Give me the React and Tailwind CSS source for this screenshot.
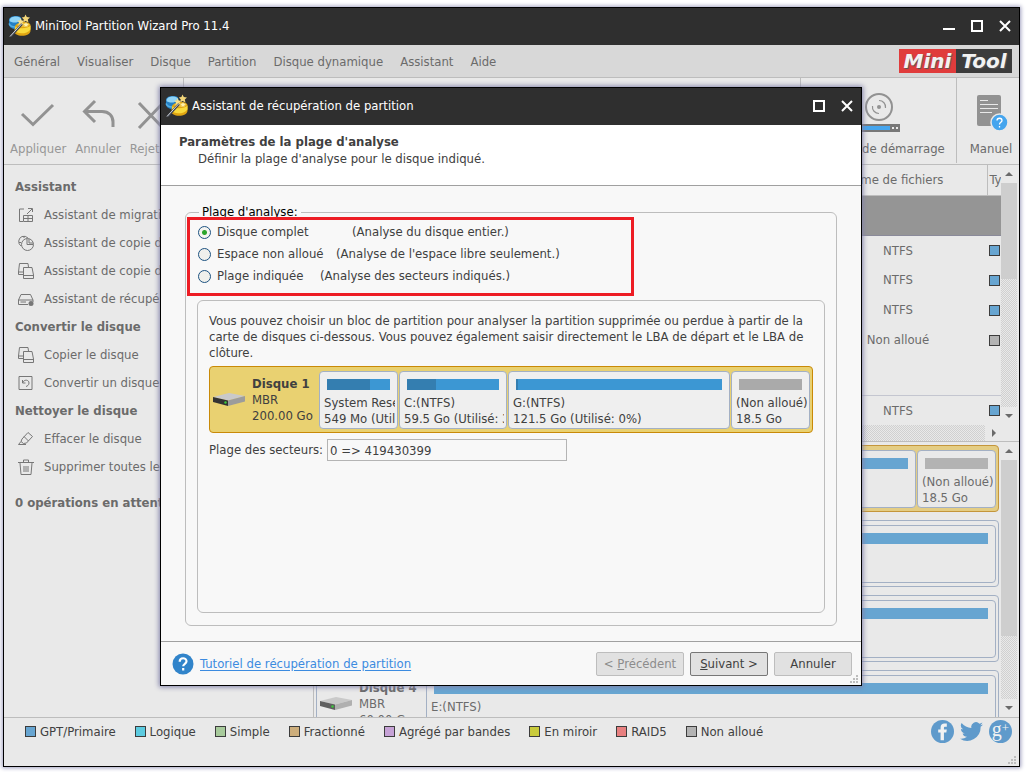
import { clsx } from "clsx";

const AppIcon = () => (
  <svg width="24" height="24" viewBox="0 0 24 24" className="shrink-0" aria-hidden="true">
    <path d="M1 6C1 3.500 4 2 8 2S13 3 13.500 5V13L7 15.500C3 14.500 1 12.500 1 10.500Z" fill="#2480c4" />
    <path d="M1.500 6C2 3.500 5 2.500 8 2.500S12.500 3.500 13 5C11 8 8 9 5 8.500C3 8 1.500 7.500 1.500 6Z" fill="#8fd3f6" />
    <path d="M1 9.500C2 12 4 13 7 13" stroke="#56aee2" strokeWidth="1.500" fill="none" />
    <path d="M7 12C8 10 12 8 16 8S22 9 22.500 11V16.500C22.500 20 18.500 21.800 14 21.800S6.500 20 6.500 17.500Z" fill="#e0a512" />
    <path d="M7.500 12.500C10 15 20 15 22.500 11.500V15.500C20.500 18.500 17 19.300 13.500 19.300S8 18 6.700 16.500Z" fill="#f9da3c" />
    <path d="M9 11C11 9 20 8 21.500 10.500C20 13.500 12 13.500 9 11Z" fill="#efc546" />
    <path d="M12.500 4L13.700 6.500L16 6.700L14.500 8.500L15 11L12.600 10L10.500 11L11 8.500L9.300 6.800L11.600 6.500Z" fill="#f8e08a" />
    <path d="M17.500 0.500L18.800 3L22 3.500L19.800 5.500L20.500 8.500L17.600 7L15.200 8.500L15.800 5.500L13.800 3.500L16.400 3Z" fill="#f3d67a" />
    <path d="M18 8L18.800 9.700L20.500 10L19.200 11.200L19.500 13L18 12L16.500 13L16.800 11.200L15.500 10L17.300 9.700Z" fill="#fdf0b0" />
    <path d="M2.500 22.500L14 10" stroke="#40444c" strokeWidth="2.400" />
    <path d="M2 22.500L13.500 10" stroke="#d4d9e0" strokeWidth="1" />
  </svg>
);

const TitleBar = ({ title, minimize }) => (
  <header className="flex h-[37px] shrink-0 items-center gap-[3px] bg-[#2f2f2f] pb-[2px] pl-1 pr-2 text-white">
    <AppIcon />
    <h1 className="flex-1">{title}</h1>
    <div className="flex gap-4">
      {minimize && (
        <button aria-label="Réduire">
          <svg width="12" height="14" viewBox="0 0 12 14"><path d="M0 10h12" stroke="#fff" strokeWidth="2" /></svg>
        </button>
      )}
      <button aria-label="Agrandir">
        <svg width="12" height="14" viewBox="0 0 12 14"><rect x="1" y="2" width="10" height="10" fill="none" stroke="#fff" strokeWidth="2" /></svg>
      </button>
      <button aria-label="Fermer">
        <svg width="12" height="14" viewBox="0 0 12 14"><path d="M1 2l10 10M11 2L1 12" stroke="#fff" strokeWidth="2" /></svg>
      </button>
    </div>
  </header>
);

const menus = ["Général", "Visualiser", "Disque", "Partition", "Disque dynamique", "Assistant", "Aide"];

const MenuBar = () => (
  <nav className="flex h-[33px] shrink-0 items-center border-b border-[#bdbdbd] bg-[#d8d8d8] pl-[10px] pr-[7px]">
    <div className="flex flex-1 gap-[17px] pt-px">
      {menus.map((name) => (
        <button key={name}>{name}</button>
      ))}
    </div>
    <div className="flex h-6 font-['DejaVu_Sans','sans-serif'] text-[20px] font-bold italic leading-6 text-[#f2f2f2] [text-shadow:1px_1px_1px_#555]">
      <span className="w-[57px] bg-[#e03c3c] text-center">Mini</span>
      <span className="w-14 bg-[#3c3c3c] text-center">Tool</span>
    </div>
  </nav>
);

const ToolButton = ({ label, disabled, children }) => (
  <button disabled={disabled} className="flex flex-col items-center gap-2 disabled:text-[#979797]">
    <svg width="42" height="42" viewBox="0 0 42 42" fill="none" stroke="#929292" strokeWidth="3">{children}</svg>
    <span className="whitespace-nowrap leading-4">{label}</span>
  </button>
);

const Toolbar = () => (
  <div className="flex h-[87px] shrink-0 border-b border-[#bdbdbd] pb-px">
    <div className="flex w-[180px] items-start gap-[9px] border-r border-[#bdbdbd] pl-[6px] pt-[13px]">
      <ToolButton label="Appliquer" disabled>
        <path d="M5 23L16 33.500L36 14" />
      </ToolButton>
      <ToolButton label="Annuler" disabled>
        <path d="M18 10L7.500 20.500L18 31M8 20.500H25C32 20.500 36 25 36 31V36" />
      </ToolButton>
      <ToolButton label="Rejeter" disabled>
        <path d="M9 12L33 37M33 12L9 37" />
      </ToolButton>
    </div>
    <div className="flex-1" />
    <div className="flex w-[156px] justify-center border-l border-[#bdbdbd] pt-[13px]">
      <ToolButton label="Support de démarrage">
        <circle cx="21" cy="16" r="13" strokeWidth="2" />
        <circle cx="21" cy="16" r="2" fill="#929292" stroke="none" />
        <path d="M14.500 15A6.500 6.500 0 0 0 21 22.500M27.500 17A6.500 6.500 0 0 0 21 9.500" strokeWidth="1.200" />
        <rect x="0" y="33" width="42" height="8" fill="#777" stroke="none" />
        <rect x="0" y="35" width="32" height="4" fill="#45a5ee" stroke="none" />
        <path d="M34 37h2M38 37h2" stroke="#e9e9e9" strokeWidth="2" />
      </ToolButton>
    </div>
    <div className="flex w-[63px] justify-center border-l border-[#bdbdbd] pl-[6px] pt-[13px]">
      <ToolButton label="Manuel">
        <rect x="7" y="4" width="24" height="31" rx="2" fill="#929292" stroke="none" />
        <path d="M10 9.500h8M10 13.500h18M10 17.500h18M10 21.500h12" stroke="#e9e9e9" strokeWidth="1" />
        <circle cx="29.500" cy="31.500" r="8.500" fill="#45a5ee" stroke="#e9e9e9" strokeWidth="1.500" />
        <path d="M27 29.500C27 26.500 32 26.500 32 29.500C32 31.300 29.500 31.300 29.500 33.500M29.500 35v1.500" stroke="#fff" strokeWidth="1.300" />
      </ToolButton>
    </div>
  </div>
);

const icons = {
  migrate: <path d="M6 2H1.500V14.500H5M9 7L14 2M10 1.500H14.500V5M5.500 8.500H14.500V14.500H5.500ZM5.500 11.500H14.500M10 8.500V14.500" />,
  partition: (
    <>
      <path d="M3 11A5.500 5.500 0 0 1 4 1.500A6 6 0 0 1 10 3M1 7.500H3M6 1V3" />
      <circle cx="9.500" cy="9.500" r="6" />
      <path d="M9 4V9.500H15M11 4V8H15" />
    </>
  ),
  copy: <path d="M5 11.500H.5V9L1.500 .5H10L10.500 4M.5 9H5M5.500 4.500H14L15.500 12V15.500H5.500ZM5.500 12.500H15.500" />,
  recover: (
    <>
      <path d="M3 3.500H12.500L15 9V11M3 3.500L.5 9V13.500H10M.5 9H15M2.500 11H8" />
      <circle cx="13" cy="12.500" r="2.500" fill="#777" stroke="none" />
    </>
  ),
  convert: <path d="M1 1.500H14V14.500H1ZM4.500 5V8H7.500M4.500 8C6 4 11 4.500 11 8C11 10 9.500 11 8 11.500" />,
  erase: <path d="M4 8L10 1.500L14.500 5.500L8.500 12L5.500 12.500L3 10.500ZM6 5.500L10.500 10M3 10.500L.5 13.500H8" />,
  trash: <path d="M0 3.500H16M5.500 3V1H10.500V3M2 4L3 15.500H13L14 4M6 7V13M8 7V13M10 7V13" />,
};

const sections = [
  {
    title: "Assistant",
    items: [
      ["migrate", "Assistant de migration"],
      ["partition", "Assistant de copie de partition"],
      ["copy", "Assistant de copie de disque"],
      ["recover", "Assistant de récupération"],
    ],
  },
  {
    title: "Convertir le disque",
    items: [
      ["copy", "Copier le disque"],
      ["convert", "Convertir un disque MBR"],
    ],
  },
  {
    title: "Nettoyer le disque",
    items: [
      ["erase", "Effacer le disque"],
      ["trash", "Supprimer toutes les partitions"],
    ],
  },
];

const Sidebar = () => (
  <aside className="w-[309px] shrink-0 pl-[11px] pt-2">
    {sections.map((section) => (
      <section key={section.title}>
        <h2 className="font-bold leading-7">{section.title}</h2>
        <ul>
          {section.items.map(([icon, label]) => (
            <li key={label}>
              <button className="flex h-7 items-center gap-[10px] pl-[3px]">
                <svg width="16" height="16" viewBox="0 0 16 16" fill="none" stroke="#777" strokeWidth="1">{icons[icon]}</svg>
                {label}
              </button>
            </li>
          ))}
        </ul>
      </section>
    ))}
    <p className="mt-2 font-bold leading-7">0 opérations en attente</p>
  </aside>
);

const ScrollArrow = ({ d }) => (
  <button aria-label="Défiler" className="grid h-[18px] w-4 shrink-0 place-items-center">
    <svg width="8" height="8" viewBox="0 0 8 8"><path d={d} fill="#6a6a6a" /></svg>
  </button>
);

const trackPattern = "bg-[repeating-conic-gradient(#d0d0d0_0_25%,#e9e9e9_0_50%)] bg-[length:2px_2px]";

const VerticalScroll = ({ thumb, track }) => (
  <div className="mr-[2px] flex w-4 shrink-0 flex-col">
    <ScrollArrow d="M0 6L4 2L8 6Z" />
    <div className={clsx("bg-[#cecece]", thumb)} />
    <div className={clsx(trackPattern, track)} />
    <ScrollArrow d="M0 2L8 2L4 6Z" />
  </div>
);

const Swatch = ({ color }) => <span className={clsx("block size-[11px] shrink-0 border border-[#3c3c3c]", color)} />;

const partitionRows = [
  ["NTFS", "bg-[#67a5d1]"],
  ["NTFS", "bg-[#67a5d1]"],
  ["NTFS", "bg-[#67a5d1]"],
  ["Non alloué", "bg-[#b3b3b3]"],
];

const PartitionRow = ({ fs, color }) => (
  <tr className="h-[30px]">
    <td />
    <td className="text-center">{fs}</td>
    <td className="pl-[2px]"><Swatch color={color} /></td>
  </tr>
);

const PartitionTable = () => (
  <div className="shrink-0 border-b border-[#bdbdbd]">
    <div className="flex">
      <div className="min-w-0 flex-1">
        <table className="w-full table-fixed border-collapse">
          <colgroup>
            <col />
            <col className="w-[178px]" />
            <col className="w-[14px]" />
          </colgroup>
          <thead>
            <tr className="h-[30px] border-b border-[#bdbdbd]">
              <th />
              <th className="whitespace-nowrap pr-6 font-normal">Système de fichiers</th>
              <th className="overflow-hidden border-l border-[#bdbdbd] pl-[2px] text-left font-normal">Type</th>
            </tr>
          </thead>
          <tbody>
            <tr className="h-10 border-b border-[#8a8a9a] bg-[#959595]"><td colSpan="3" /></tr>
            {partitionRows.map(([fs, color], i) => (
              <PartitionRow key={i} fs={fs} color={color} />
            ))}
            <tr className="h-10 border-b border-[#c4c6d0]"><td colSpan="3" /></tr>
            <PartitionRow fs="NTFS" color="bg-[#67a5d1]" />
          </tbody>
        </table>
      </div>
      <VerticalScroll thumb="flex-[3]" track="flex-[4]" />
    </div>
    <div className="flex h-4 items-center pr-[18px]">
      <div className={clsx("h-4 flex-1", trackPattern)} />
      <ScrollArrow d="M3 0L7 4L3 8Z" />
    </div>
  </div>
);

const DriveIcon = ({ dim }) => (
  <svg width="34" height="14" viewBox="0 0 34 14" className="shrink-0" aria-hidden="true">
    <path d="M1 4L17 0L33 3L16 7.500Z" fill="#c9c9c9" />
    <path d="M1 4L16 7.500V13L1 9Z" fill={dim ? "#5f5f5f" : "#333"} />
    <path d="M16 7.500L33 3V8.500L16 13Z" fill={dim ? "#b0b0b0" : "#9c9c9c"} />
    <circle cx="13.500" cy="9.500" r="1.200" fill="#3ccb3c" />
  </svg>
);

const Partition = ({ name, detail, used, width = "flex-1", gray, dim }) => (
  <div className={clsx("h-[58px] min-w-0 overflow-hidden whitespace-nowrap rounded border border-[#a3b0c4] pl-1 pr-[2px] pt-[7px]", dim ? "bg-[#e9e9e9]" : "bg-[#efefef]", width)}>
    <div className={clsx("mb-[5px] ml-[3px] mr-[5px] h-[11px]", gray ? (dim ? "bg-[#b3b3b3]" : "bg-[#aaaaaa]") : dim ? "bg-[#67a5d1]" : "bg-[#3c97d3]")}>
      <div className="h-full bg-[#347eb0]" style={{ width: used || 0 }} />
    </div>
    <div className="overflow-hidden">
      <p>{name}</p>
      <p>{detail}</p>
    </div>
  </div>
);

const DiskCard = ({ name, size, selected, dim, children }) => (
  <article
    className={clsx(
      "flex h-[67px] shrink-0 items-center rounded border pr-[2px] leading-4",
      selected ? (dim ? "border-[#c4963c] bg-[#e4cd84]" : "border-[#c98a08] bg-[#e9d171]") : "border-[#a3b0c4]"
    )}
  >
    <div className="flex w-[109px] shrink-0 items-center gap-[6px] pl-[2px]">
      <DriveIcon dim={dim} />
      <div className="whitespace-nowrap">
        <h3 className="font-bold">{name}</h3>
        <p>MBR</p>
        <p>{size}</p>
      </div>
    </div>
    <div className="flex min-w-0 flex-1 gap-px">{children}</div>
  </article>
);

const DiskMap = () => (
  <div className="flex min-h-0 flex-1">
    <div className="flex min-w-0 flex-1 flex-col gap-2 overflow-hidden pl-[2px] pr-[2px] pt-[3px]">
      <DiskCard name="Disque 1" size="200.00 Go" selected dim>
        <Partition dim />
        <Partition dim gray width="w-[79px]" name="(Non alloué)" detail="18.5 Go" />
      </DiskCard>
      <DiskCard name="Disque 2" size="60.00 Go" dim><Partition dim /></DiskCard>
      <DiskCard name="Disque 3" size="60.00 Go" dim><Partition dim /></DiskCard>
      <DiskCard name="Disque 4" size="60.00 Go" dim><Partition dim name="E:(NTFS)" /></DiskCard>
    </div>
    <VerticalScroll thumb="flex-[14]" track="flex-[5]" />
  </div>
);

const legend = [
  ["GPT/Primaire", "bg-[#67a5d1]"],
  ["Logique", "bg-[#5ccbe0]"],
  ["Simple", "bg-[#a8cb9c]"],
  ["Fractionné", "bg-[#cdae7c]"],
  ["Agrégé par bandes", "bg-[#c6a2d6]"],
  ["En miroir", "bg-[#c9cb3c]"],
  ["RAID5", "bg-[#e88080]"],
  ["Non alloué", "bg-[#b3b3b3]"],
];

const Grip = () => (
  <svg width="8" height="8" viewBox="0 0 8 8" fill="#bdbdbd" aria-hidden="true">
    <path d="M6 0h2v2H6zM3 3h2v2H3zM6 3h2v2H6zM0 6h2v2H0zM3 6h2v2H3zM6 6h2v2H6z" />
  </svg>
);

const StatusBar = () => (
  <footer className="relative flex h-[49px] shrink-0 items-start border-t border-[#bdbdbd] pl-[21px] pr-[7px] pt-[2px] text-[#404040]">
    <ul className="flex flex-1 gap-[19px] pt-[2px]">
      {legend.map(([label, color]) => (
        <li key={label} className="flex items-center gap-1 whitespace-nowrap">
          <Swatch color={color} />
          {label}
        </li>
      ))}
    </ul>
    <div className="flex gap-[6px]">
      <a href="#facebook" aria-label="Facebook">
        <svg width="23" height="23" viewBox="0 0 24 24">
          <circle cx="12" cy="12" r="12" fill="#5f9acb" />
          <path d="M10 21V13H7.500V9.800H10V8C10 5 11.500 3.700 14.200 3.700H16.500V7H15C13.800 7 13.500 7.400 13.500 8.500V9.800H16.500L16 13H13.500V21Z" fill="#f2f2f2" />
        </svg>
      </a>
      <a href="#twitter" aria-label="Twitter">
        <svg width="23" height="23" viewBox="0 0 24 24">
          <path d="M24 4.600a10 10 0 0 1-2.800.8 5 5 0 0 0 2.200-2.700 10 10 0 0 1-3.100 1.200 4.900 4.900 0 0 0-8.400 4.500A14 14 0 0 1 1.700 3.200a4.900 4.900 0 0 0 1.500 6.500 5 5 0 0 1-2.200-.6 4.900 4.900 0 0 0 4 4.900 5 5 0 0 1-2.300.1 4.900 4.900 0 0 0 4.600 3.400A9.900 9.900 0 0 1 0 19.500 14 14 0 0 0 21.500 7.100 10 10 0 0 0 24 4.600Z" fill="#5f9acb" />
        </svg>
      </a>
      <a href="#google" aria-label="Google+" className="flex size-[23px] justify-center rounded-full bg-[#5f9acb] font-['Liberation_Serif','serif'] text-[20px] leading-[18px] text-[#f2f2f2]">
        g<span className="text-[13px] leading-4">+</span>
      </a>
    </div>
    <div className="absolute bottom-[2px] right-[3px]"><Grip /></div>
  </footer>
);

const ranges = [
  ["Disque complet", "(Analyse du disque entier.)", "w-[135px]"],
  ["Espace non alloué", "(Analyse de l'espace libre seulement.)", "w-[119px]"],
  ["Plage indiquée", "(Analyse des secteurs indiqués.)", "w-[103px]"],
];

const ScanRange = () => (
  <div className="relative -ml-[11px] -mt-[3px] mb-1 h-[79px] w-[447px] border-[3px] border-[#ed1c24] bg-[#f8f8f8] pl-2 pt-px">
    {ranges.map(([label, hint, width], i) => (
      <label key={label} className="flex h-[22px] items-center gap-[6px] whitespace-nowrap">
        <input
          type="radio"
          name="range"
          defaultChecked={i === 0}
          className="size-[13px] shrink-0 appearance-none rounded-full border border-[#1d5281] bg-[#f0f0ec] checked:bg-[radial-gradient(#2ba52b_0_2px,#f4f4f0_3px)]"
        />
        <span className="flex">
          <span className={width}>{label}</span>
          <span>{hint}</span>
        </span>
      </label>
    ))}
  </div>
);

const RecoveryDialog = () => (
  <section
    role="dialog"
    aria-label="Assistant de récupération de partition"
    className="absolute bottom-[80px] left-[156px] right-[157px] top-[79px] flex flex-col border border-black bg-[#f8f8f8] text-[#404040] shadow-[0_0_5px_1px_#8080a8]"
  >
    <TitleBar title="Assistant de récupération de partition" />
    <div className="h-[61px] shrink-0 border-b border-[#a0a0a0] bg-white pl-[18px] pt-2 leading-[17px]">
      <h2 className="font-bold">Paramètres de la plage d'analyse</h2>
      <p className="pl-[19px]">Définir la plage d'analyse pour le disque indiqué.</p>
    </div>

    <div className="flex min-h-0 flex-1 flex-col px-6 pb-[15px] pt-[18px]">
      <fieldset className="flex min-h-0 flex-1 flex-col rounded-md border border-[#bdbdbd] px-[11px] pb-3">
        <legend className="ml-[2px] px-[3px] leading-4 text-black">Plage d'analyse:</legend>
        <div className="flex min-h-0 flex-1 flex-col">
          <div className="pl-px"><ScanRange /></div>
          <div className="min-h-0 flex-1 rounded-md border border-[#bdbdbd] px-[11px] pt-3">
            <p className="leading-4">
              Vous pouvez choisir un bloc de partition pour analyser la partition supprimée ou perdue à partir de la carte de disques ci-dessous. Vous pouvez également saisir directement le LBA de départ et le LBA de clôture.
            </p>
            <div className="mb-[6px] mt-[5px]">
              <DiskCard name="Disque 1" size="200.00 Go" selected>
                <Partition name="System Reserved" detail="549 Mo (Utilisé: 68%)" used="68%" width="w-[79px]" />
                <Partition name="C:(NTFS)" detail="59.5 Go (Utilisé: 31%)" used="31%" width="w-[108px]" />
                <Partition name="G:(NTFS)" detail="121.5 Go (Utilisé: 0%)" used="1%" />
                <Partition name="(Non alloué)" detail="18.5 Go" gray width="w-[79px]" />
              </DiskCard>
            </div>
            <div className="flex items-center gap-1">
              <label htmlFor="sectors" className="whitespace-nowrap">Plage des secteurs:</label>
              <input id="sectors" defaultValue="0 => 419430399" className="h-[22px] w-60 border border-[#b4b4b4] px-[2px]" />
            </div>
          </div>
        </div>
      </fieldset>
    </div>

    <footer className="relative flex h-11 shrink-0 items-center gap-[6px] border-t border-[#a0a0a0] pl-[11px] pr-[9px]">
      <svg width="22" height="22" viewBox="0 0 22 22" aria-hidden="true">
        <circle cx="11" cy="11" r="10.500" fill="#3184ca" />
        <path d="M7.700 8.700C7.700 4 14.500 4.300 14.500 8.300C14.500 10.800 11.200 10.800 11.200 13.300M11.200 15v2.500" fill="none" stroke="#fff" strokeWidth="2.200" />
      </svg>
      <a href="#tutoriel" className="text-[#3c8be0] underline underline-offset-2">Tutoriel de récupération de partition</a>
      <div className="flex-1" />
      <button disabled className="h-6 w-[88px] rounded-xs border border-[#bdbdbd] bg-[#e1e1e1] text-[#8c8c8c]">
        &lt; <u>P</u>récédent
      </button>
      <button className="h-6 w-[78px] rounded-xs border border-[#777] bg-[#e1e1e1]">
        <u>S</u>uivant &gt;
      </button>
      <button className="h-6 w-[78px] rounded-xs border border-[#bdbdbd] bg-[#e1e1e1]">Annuler</button>
      <div className="absolute bottom-[2px] right-[3px]"><Grip /></div>
    </footer>
  </section>
);

const App = () => (
  <div className="flex h-screen bg-white pb-[5px] pl-[3px] pr-[6px] pt-[7px] font-['DejaVu_Sans_Condensed','DejaVu_Sans','sans-serif'] text-[13px] text-[#6b6b6b]">
    <main className="relative flex min-w-0 flex-1 flex-col border border-black bg-[#e9e9e9] shadow-[0_0_4px_1px_#a0a0c0]">
      <TitleBar title="MiniTool Partition Wizard Pro 11.4" minimize />
      <MenuBar />
      <Toolbar />
      <div className="flex min-h-0 flex-1">
        <Sidebar />
        <div className="flex min-w-0 flex-1 flex-col border-l border-[#bdbdbd]">
          <PartitionTable />
          <DiskMap />
        </div>
      </div>
      <StatusBar />
      <RecoveryDialog />
    </main>
  </div>
);

export default App;
